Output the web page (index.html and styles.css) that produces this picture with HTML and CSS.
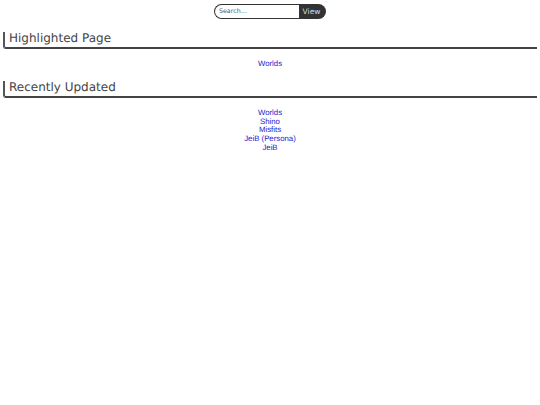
FILE: index.html
```html
<!DOCTYPE html>
<html lang="en">
<head>
    <meta charset="UTF-8">
    <meta name="viewport" content="width=device-width, initial-scale=1.0">
    <title>Home</title>
    <link rel="stylesheet" href="styles.css">
</head>
<body>
    <form class="search">
        <input class="search-input" type="text" placeholder="Search...">
        <button class="search-button" type="button">View</button>
    </form>

    <h2 class="section-title">Highlighted Page</h2>
    <div class="links">
        <a href="#">Worlds</a>
    </div>

    <h2 class="section-title">Recently Updated</h2>
    <div class="links">
        <a href="#">Worlds</a>
        <a href="#">Shino</a>
        <a href="#">Misfits</a>
        <a href="#">JeiB (Persona)</a>
        <a href="#">JeiB</a>
    </div>
</body>
</html>
```

FILE: styles.css
```css
body{
    margin: 0;
    padding: 4px 3px 0 3px;
    background-color: #fff;
    font-family: "Liberation Sans", Arial, sans-serif;
    font-size: 7.8px;
    text-rendering: geometricPrecision;
}

.search{
    display: flex;
    justify-content: center;
    height: 15px;
}

.search-input{
    box-sizing: border-box;
    width: 85px;
    height: 15px;
    margin: 0;
    padding: 0 0 0 4px;
    border: 1px solid #333;
    border-right: none;
    border-radius: 8px 0 0 8px;
    outline: none;
    font-family: "DejaVu Sans", sans-serif;
    font-size: 6.3px;
    text-rendering: geometricPrecision;
}

.search-input::placeholder{
    color: #555;
}

.search-button{
    width: 27px;
    height: 15px;
    margin: 0;
    padding: 0 2px 0 0;
    border: none;
    border-radius: 0 8px 8px 0;
    background-color: #333;
    color: #ddd;
    font-family: "DejaVu Sans", sans-serif;
    font-size: 7.5px;
    text-rendering: geometricPrecision;
}

.section-title{
    box-sizing: border-box;
    height: 17px;
    margin: 12px 0 0 0;
    padding: 0 0 0 4px;
    border-left: 2px solid #555;
    border-bottom: 2px solid #444;
    border-bottom-left-radius: 3px;
    color: #444;
    font-family: "DejaVu Sans", sans-serif;
    font-size: 12px;
    font-weight: 400;
    line-height: 13px;
}

.search + .section-title{
    margin-top: 13px;
}

.links{
    display: flex;
    flex-direction: column;
    align-items: center;
    margin: 11px 0 0 0;
    line-height: 8.75px;
}

.links a{
    color: #2222cc;
    text-decoration: none;
}
```
